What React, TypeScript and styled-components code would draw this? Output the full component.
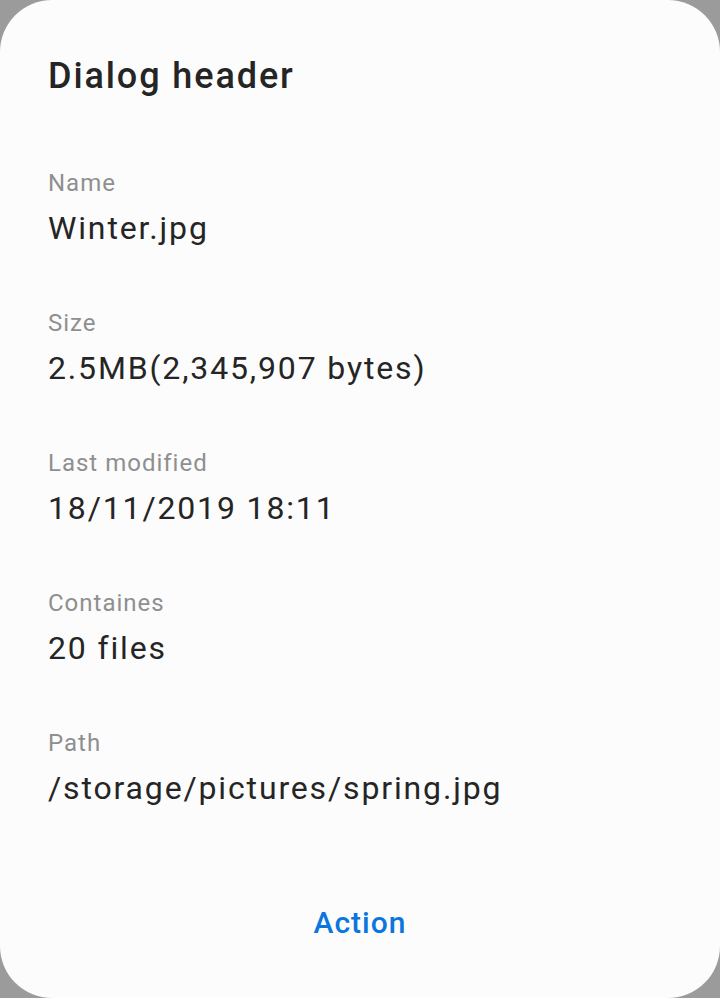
import React from "react";
import styled, { createGlobalStyle } from "styled-components";

const Global = createGlobalStyle`
  html, body { margin: 0; padding: 0; background: #9b9b9b; }
  body { font-family: Roboto, "Noto Sans", Arial, sans-serif; }
`;

const Dialog = styled.div`
  box-sizing: border-box;
  width: 720px;
  height: 998px;
  background: #fcfcfc;
  border-radius: 52px;
  padding: 52px 48px 0 48px;
  display: flex;
  flex-direction: column;
`;

const Header = styled.h1`
  margin: 0;
  font-size: 36px;
  line-height: 48px;
  font-weight: 500;
  letter-spacing: 1.9px;
  color: #252525;
`;

const Fields = styled.div`
  display: flex;
  flex-direction: column;
  gap: 57px;
  margin-top: 67px;
`;

const Field = styled.div`
  display: flex;
  flex-direction: column;
  gap: 7px;
`;

const Label = styled.div`
  font-size: 24px;
  line-height: 32px;
  letter-spacing: 1px;
  color: #8f8f8f;
`;

const Value = styled.div`
  font-size: 32px;
  line-height: 44px;
  letter-spacing: 1.85px;
  color: #252525;
`;

const Footer = styled.div`
  display: flex;
  justify-content: center;
  margin-top: auto;
  padding-bottom: 55px;
`;

const ActionButton = styled.button`
  border: none;
  background: none;
  padding: 0;
  font-family: inherit;
  font-size: 30px;
  line-height: 40px;
  font-weight: 500;
  letter-spacing: 1px;
  color: #0a76de;
  cursor: pointer;
`;

const fields = [
  { label: "Name", value: "Winter.jpg" },
  { label: "Size", value: "2.5MB(2,345,907 bytes)" },
  { label: "Last modified", value: "18/11/2019 18:11" },
  { label: "Containes", value: "20 files" },
  { label: "Path", value: "/storage/pictures/spring.jpg" },
];

export default function App() {
  return (
    <>
      <Global />
      <Dialog>
        <Header>Dialog header</Header>
        <Fields>
          {fields.map((f) => (
            <Field key={f.label}>
              <Label>{f.label}</Label>
              <Value>{f.value}</Value>
            </Field>
          ))}
        </Fields>
        <Footer>
          <ActionButton>Action</ActionButton>
        </Footer>
      </Dialog>
    </>
  );
}
